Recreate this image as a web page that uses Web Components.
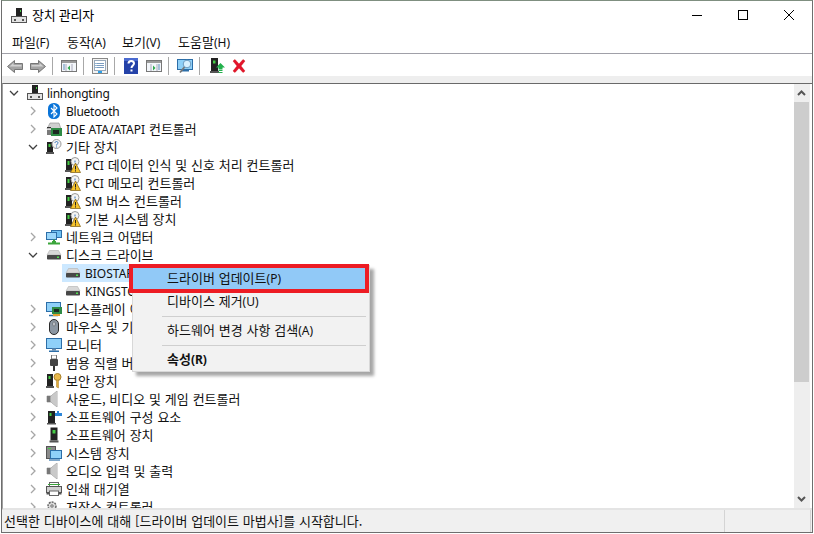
<!DOCTYPE html>
<html lang="ko">
<head>
<meta charset="utf-8">
<title>장치 관리자</title>
<style>
  html, body { margin: 0; height: 100%; background: #fff; overflow: hidden; }
  body { font: 13px "Noto Sans CJK KR", "Noto Sans", sans-serif; word-spacing: .2px; color: #000; }
</style>
</head>
<body>
<dm-window>
  <dm-titlebar slot="title">장치 관리자</dm-titlebar>
  <dm-menubar slot="menu">
    <dm-menu-item style="width:55px">파일<dm-lat>(F)</dm-lat></dm-menu-item>
    <dm-menu-item style="width:55px">동작<dm-lat>(A)</dm-lat></dm-menu-item>
    <dm-menu-item style="width:56px">보기<dm-lat>(V)</dm-lat></dm-menu-item>
    <dm-menu-item>도움말<dm-lat>(H)</dm-lat></dm-menu-item>
  </dm-menubar>
  <dm-toolbar slot="toolbar"></dm-toolbar>
  <dm-tree slot="tree">
    <dm-row level="0" state="open" icon="computer"><dm-lat tight>linhongting</dm-lat></dm-row>
    <dm-row level="1" state="closed" icon="bluetooth"><dm-lat tight>Bluetooth</dm-lat></dm-row>
    <dm-row level="1" state="closed" icon="ide"><dm-lat>IDE ATA/ATAPI</dm-lat> 컨트롤러</dm-row>
    <dm-row level="1" state="open" icon="other">기타 장치</dm-row>
    <dm-row level="2" icon="warn"><dm-lat>PCI</dm-lat> 데이터 인식 및 신호 처리 컨트롤러</dm-row>
    <dm-row level="2" icon="warn"><dm-lat>PCI</dm-lat> 메모리 컨트롤러</dm-row>
    <dm-row level="2" icon="warn"><dm-lat>SM</dm-lat> 버스 컨트롤러</dm-row>
    <dm-row level="2" icon="warn">기본 시스템 장치</dm-row>
    <dm-row level="1" state="closed" icon="network">네트워크 어댑터</dm-row>
    <dm-row level="1" state="open" icon="disk">디스크 드라이브</dm-row>
    <dm-row level="2" icon="disk" selected><dm-lat>BIOSTAR S120 240GB</dm-lat></dm-row>
    <dm-row level="2" icon="disk"><dm-lat>KINGSTON SA400S37</dm-lat></dm-row>
    <dm-row level="1" state="closed" icon="display">디스플레이 어댑터</dm-row>
    <dm-row level="1" state="closed" icon="mouse">마우스 및 기타 포인팅 장치</dm-row>
    <dm-row level="1" state="closed" icon="monitor">모니터</dm-row>
    <dm-row level="1" state="closed" icon="usb">범용 직렬 버스 컨트롤러</dm-row>
    <dm-row level="1" state="closed" icon="security">보안 장치</dm-row>
    <dm-row level="1" state="closed" icon="sound">사운드, 비디오 및 게임 컨트롤러</dm-row>
    <dm-row level="1" state="closed" icon="component">소프트웨어 구성 요소</dm-row>
    <dm-row level="1" state="closed" icon="tower">소프트웨어 장치</dm-row>
    <dm-row level="1" state="closed" icon="system">시스템 장치</dm-row>
    <dm-row level="1" state="closed" icon="sound">오디오 입력 및 출력</dm-row>
    <dm-row level="1" state="closed" icon="printer">인쇄 대기열</dm-row>
    <dm-row level="1" state="closed" icon="storage">저장소 컨트롤러</dm-row>
    <dm-context-menu slot="overlay">
      <dm-context-item active>드라이버 업데이트<dm-lat>(P)</dm-lat></dm-context-item>
      <dm-context-item>디바이스 제거<dm-lat>(U)</dm-lat></dm-context-item>
      <dm-separator></dm-separator>
      <dm-context-item>하드웨어 변경 사항 검색<dm-lat>(A)</dm-lat></dm-context-item>
      <dm-separator></dm-separator>
      <dm-context-item bold>속성<dm-lat>(R)</dm-lat></dm-context-item>
    </dm-context-menu>
  </dm-tree>
  <dm-statusbar slot="status">선택한 디바이스에 대해 [드라이버 업데이트 마법사]를 시작합니다.</dm-statusbar>
</dm-window>

<script>
// all icons are 16x16
const ICONS = {
  computer: `<rect x="5" y="0" width="6" height="9" fill="#222"/><rect x="9" y="2" width="1" height="2" fill="#4c4"/><rect x="0.5" y="8.5" width="15" height="6" fill="#e4e4e4" stroke="#555"/><rect x="3" y="11" width="2" height="2" fill="#555"/><rect x="11" y="11" width="2" height="2" fill="#555"/>`,
  bluetooth: `<rect x="2" y="0" width="12" height="16" rx="5.5" fill="#0a74d8"/><path d="M5 5l6 6-3 3V2l3 3-6 6" fill="none" stroke="#fff" stroke-width="1.1"/>`,
  ide: `<path d="M1 8l3-6h9l2 6z" fill="#cfcfcf" stroke="#888" stroke-width=".6"/><rect x="1" y="6" width="4" height="1" fill="#333"/><rect x="5" y="7" width="11" height="8" fill="#2e8b45"/><rect x="7" y="9" width="6" height="4" fill="#1c2a22"/><rect x="1" y="9" width="4" height="5" fill="#7a7a7a"/>`,
  other: `<rect x="1" y="3" width="6" height="10" fill="#222"/><rect x="2.5" y="5" width="2" height="3" fill="#4c4"/><rect x="0" y="13" width="8" height="2" fill="#555"/><circle cx="10.5" cy="5" r="4.5" fill="#f4f4f4" stroke="#9a9a9a"/><path d="M9 4c0-2 3-2 3 0 0 1-1.500 1-1.500 2.500M10.500 7.500v1" fill="none" stroke="#3a74b8"/>`,
  warn: `<rect x="1" y="2" width="6" height="11" fill="#222"/><rect x="2.500" y="4" width="2" height="4" fill="#4c4"/><rect x="0" y="13" width="8" height="2" fill="#555"/><circle cx="10" cy="4.500" r="4" fill="#f4f4f4" stroke="#9a9a9a"/><path d="M10 3.500v2" stroke="#3a74b8"/><path d="M10.500 6l5 9.500H5.500z" fill="#f6c32c" stroke="#7a5a10" stroke-width=".7"/><path d="M10.500 9v3.500M10.500 13.300v1.200" stroke="#222"/>`,
  network: `<rect x="5.500" y="1.500" width="10" height="7" fill="#6fc0f2" stroke="#2c6ea8"/><rect x="0.500" y="3.500" width="10" height="7" fill="#9ad6fa" stroke="#2c6ea8"/><path d="M2 14.500h12M8 10.500v4" stroke="#3aa53a" stroke-width="2"/><rect x="6" y="12" width="4" height="3" fill="#3aa53a"/>`,
  disk: `<path d="M1 8l2.500-4.500h9L15 8z" fill="#d8d8d8" stroke="#b0b0b0" stroke-width=".6"/><rect x="1" y="8" width="14" height="4.500" rx=".8" fill="#474747"/><rect x="11" y="9.500" width="2" height="1.500" fill="#4fe04f"/>`,
  display: `<rect x="0.500" y="1.500" width="14" height="9" fill="#8fd0f8" stroke="#2c6ea8"/><path d="M3 14.500h9" stroke="#2c6ea8" stroke-width="1.500"/><rect x="6" y="6" width="10" height="7" fill="#2e8b45"/><rect x="8" y="8" width="5" height="3" fill="#1c2a22"/><rect x="7" y="13" width="7" height="2" fill="#e0a030"/>`,
  mouse: `<rect x="3.500" y="0.500" width="9" height="15" rx="4.500" fill="#8c97a3" stroke="#2a2a2a"/><rect x="7" y="3" width="2" height="4" rx="1" fill="#dfe6ee" stroke="#444" stroke-width=".5"/>`,
  monitor: `<rect x="0.500" y="1.500" width="15" height="10" fill="#8fd0f8" stroke="#2c6ea8"/><rect x="6" y="11.500" width="4" height="2" fill="#6a8aa8"/><rect x="3" y="13.500" width="10" height="1.500" fill="#2c6ea8"/>`,
  usb: `<rect x="5.500" y="0" width="5" height="4" fill="#fff" stroke="#777"/><rect x="4" y="4" width="8" height="7" rx="1" fill="#444"/><path d="M8 11v5" stroke="#333" stroke-width="2"/>`,
  security: `<rect x="1" y="1" width="6" height="12" fill="#222"/><rect x="2.500" y="3" width="2" height="3" fill="#4c4"/><rect x="0" y="13" width="8" height="2" fill="#555"/><circle cx="11.500" cy="4" r="3.500" fill="#e8b84a" stroke="#a8802a"/><path d="M10.500 7h2v8l-2-1z" fill="#e0aa3a" stroke="#a8802a" stroke-width=".5"/>`,
  sound: `<path d="M1 5h4l6-5v16l-6-5H1z" fill="#a9a9a9" stroke="#7c7c7c" stroke-width=".6"/><path d="M5 5l6-5v16l-6-5z" fill="#c9c9c9"/><rect x="1" y="5" width="3" height="6" fill="#777"/>`,
  component: `<rect x="2" y="2" width="7" height="12" fill="#222"/><rect x="3.500" y="4" width="2" height="3" fill="#4c4"/><rect x="1" y="14" width="9" height="1.500" fill="#555"/><path d="M9 4h2V2h2v2h3v3H9z" fill="#2e86d8"/>`,
  tower: `<rect x="4.500" y="0.500" width="7" height="13" fill="#222"/><rect x="6.500" y="3" width="3" height="3.500" fill="#4c4"/><rect x="3.500" y="13.500" width="9" height="2" fill="#555"/>`,
  system: `<rect x="0.500" y="1.500" width="9" height="12" fill="#8a8a8a" stroke="#555"/><rect x="2" y="3" width="3" height="1" fill="#4c4"/><rect x="4.500" y="5.500" width="11" height="8" fill="#8fd0f8" stroke="#2c6ea8"/><path d="M3 15h11" stroke="#2c6ea8" stroke-width="1.200"/>`,
  printer: `<rect x="3.500" y="1.500" width="9" height="4" fill="#fff" stroke="#666"/><rect x="2" y="3" width="12" height="1" fill="#3aa53a"/><rect x="0.500" y="5.500" width="15" height="6" fill="#d0d0d0" stroke="#555"/><rect x="3.500" y="10" width="9" height="4.500" fill="#fff" stroke="#666"/><rect x="0.500" y="11.500" width="3" height="2" fill="#555"/><rect x="12.500" y="11.500" width="3" height="2" fill="#555"/>`,
  storage: `<circle cx="6" cy="7" r="4" fill="#ddd" stroke="#666" stroke-width="1.500" stroke-dasharray="2 1"/><circle cx="6" cy="7" r="1.200" fill="#fff" stroke="#666"/><rect x="3" y="12" width="12" height="3" fill="#777"/>`,
  tbBack: `<path d="M7.500 2.500L.5 8.500l7 6v-3h8v-6h-8z" fill="#a4a4a4" stroke="#777"/><path d="M2.500 8.500L6.500 5v2h8v1.500z" fill="#d2d2d2"/>`,
  tbForward: `<path d="M8.500 2.500l7 6-7 6v-3h-8v-6h8z" fill="#a4a4a4" stroke="#777"/><path d="M13.500 8.500L9.500 5v2h-8v1.500z" fill="#d2d2d2"/>`,
  tbConsole: `<rect x="0.500" y="2.500" width="15" height="11" fill="#f3f6fa" stroke="#777"/><rect x="1" y="3" width="14" height="2" fill="#9a9a9a"/><path d="M5 6v7M11 6v7" stroke="#aab"/><path d="M2 7h2M2 9h2M2 11h2" stroke="#5a8ab8"/><path d="M9 7.500v5L6.500 10z" fill="#2ca84a"/>`,
  tbProps: `<rect x="0.500" y="0.500" width="15" height="15" fill="#f2f2f2" stroke="#888"/><rect x="2.500" y="2.500" width="11" height="10" fill="#fff" stroke="#9ab"/><path d="M5 5.500h7M5 7.500h7M5 9.500h7" stroke="#7a9cc0"/><path d="M3.500 5.500h1M3.500 7.500h1M3.500 9.500h1" stroke="#2c6ea8"/><rect x="6" y="13" width="4" height="2" fill="#2ca0e8"/>`,
  tbHelp: `<rect x="1" y="0" width="14" height="16" fill="#2442a8"/><rect x="1" y="0" width="14" height="3" fill="#4a6ad0"/><path d="M5.500 5.500c0-3.500 5.500-3.500 5.500 0 0 2-2.500 2-2.500 4.500" fill="none" stroke="#fff" stroke-width="2"/><rect x="7.500" y="11.500" width="2" height="2" fill="#fff"/>`,
  tbAction: `<rect x="0.500" y="2.500" width="15" height="11" fill="#f3f6fa" stroke="#777"/><rect x="1" y="3" width="14" height="2" fill="#9a9a9a"/><path d="M5 6v7M11 6v7" stroke="#aab"/><path d="M12 7h2M12 9h2M12 11h2" stroke="#5a8ab8"/><path d="M7 7.500v5L9.500 10z" fill="#2ca84a"/>`,
  tbScan: `<rect x="0.500" y="1.500" width="15" height="10" fill="#8fd0f8" stroke="#2c6ea8"/><rect x="4" y="12" width="8" height="1.500" fill="#2c6ea8"/><circle cx="10" cy="6" r="3.800" fill="#d8f0ff" stroke="#6a9ac0"/><path d="M7.500 9L3 14.500" stroke="#777" stroke-width="1.800"/>`,
  tbUpdate: `<rect x="1" y="0" width="7" height="13" fill="#222"/><rect x="3" y="2.500" width="2.500" height="3" fill="#4c4"/><rect x="0" y="13" width="9" height="2" fill="#555"/><path d="M10.500 5l4.500 4.500h-2.500v2h-4v-2H6z" fill="#22b14c"/><path d="M8.500 12.500h4M8.500 14.500h4" stroke="#22b14c" stroke-width="1.200"/>`,
  tbRemove: `<path d="M2 3l4 5-4 5 2 1.500L8 10l4 4.500 2-1.500-4-5 4-5-2-1.500L8 6 4 1.500z" fill="#e3132c" stroke="#c00" stroke-width=".4"/>`
};

class DmIcon extends HTMLElement {
  connectedCallback() {
    const root = this.shadowRoot || this.attachShadow({ mode: "open" });
    root.innerHTML = `<style>:host{display:block;width:16px;height:16px;flex:none} svg{display:block}</style>
      <svg width="16" height="16" viewBox="0 0 16 16" shape-rendering="geometricPrecision">${ICONS[this.getAttribute("name")] || ""}</svg>`;
  }
}
customElements.define("dm-icon", DmIcon);

// latin runs are set a size below the hangul, as in the reference
class DmLat extends HTMLElement {
  constructor() {
    super();
    // no whitespace around the slot: this element is inline
    this.attachShadow({ mode: "open" }).innerHTML = `<style>
        :host { display: inline; font-family: "Noto Sans", sans-serif; font-size: 12px; word-spacing: 0; }
        :host([tight]) { letter-spacing: -.25px; }
      </style><slot></slot>`;
  }
}
customElements.define("dm-lat", DmLat);

const windowTpl = document.createElement("template");
windowTpl.innerHTML = `
  <style>
    :host {
      display: flex;
      flex-direction: column;
      box-sizing: border-box;
      height: 533px;
      margin: 0 1px 0 1px;
      background: #fff;
      border: 1px solid #6e6e6e;
      border-top: 1px solid #7f8f80;
      overflow: hidden;
    }
    .tree { flex: 1; min-height: 0; display: flex; }
  </style>
  <slot name="title"></slot>
  <slot name="menu"></slot>
  <slot name="toolbar"></slot>
  <div class="tree"><slot name="tree"></slot></div>
  <slot name="status"></slot>
`;
class DmWindow extends HTMLElement {
  constructor() {
    super();
    this.attachShadow({ mode: "open" });
    this.shadowRoot.appendChild(windowTpl.content.cloneNode(true));
  }
}
customElements.define("dm-window", DmWindow);

const titleTpl = document.createElement("template");
titleTpl.innerHTML = `
  <style>
    :host { display: flex; align-items: center; height: 30px; flex: none; padding-left: 9px; }
    dm-icon { margin-right: 5px; }
    .text { flex: 1; letter-spacing: -.3px; padding-bottom: 3px; line-height: 18px; }
    .btn { width: 46px; height: 30px; display: flex; align-items: center; justify-content: center; padding-bottom: 2px; box-sizing: border-box; }
    svg { display: block; }
  </style>
  <dm-icon name="computer"></dm-icon>
  <span class="text"><slot></slot></span>
  <span class="btn"><svg width="10" height="10"><path d="M0 5.500h10" stroke="#000"/></svg></span>
  <span class="btn"><svg width="10" height="10"><rect x=".5" y=".5" width="9" height="9" fill="none" stroke="#000"/></svg></span>
  <span class="btn"><svg width="10" height="10"><path d="M0 0l10 10M10 0L0 10" stroke="#000"/></svg></span>
`;
class DmTitlebar extends HTMLElement {
  constructor() {
    super();
    this.attachShadow({ mode: "open" });
    this.shadowRoot.appendChild(titleTpl.content.cloneNode(true));
  }
}
customElements.define("dm-titlebar", DmTitlebar);

class DmMenubar extends HTMLElement {
  constructor() {
    super();
    this.attachShadow({ mode: "open" }).innerHTML = `
      <style>
        :host { display: flex; align-items: center; flex: none; height: 22px; padding-left: 10px; border-bottom: 1px solid #a0a0a8; }
      </style>
      <slot></slot>`;
  }
}
customElements.define("dm-menubar", DmMenubar);

class DmMenuItem extends HTMLElement {
  constructor() {
    super();
    this.attachShadow({ mode: "open" }).innerHTML = `
      <style>:host { display: block; color: #111; line-height: 18px; }</style><slot></slot>`;
  }
}
customElements.define("dm-menu-item", DmMenuItem);

class DmToolbar extends HTMLElement {
  constructor() {
    super();
    const groups = [
      ["tbBack", "tbForward"],
      ["tbConsole"],
      ["tbProps"],
      ["tbHelp", "tbAction"],
      ["tbScan"],
      ["tbUpdate", "tbRemove"]
    ];
    const html = groups.map(g => `<div class="group">${g.map(n => `<dm-icon name="${n}"></dm-icon>`).join("")}</div>`).join('<i class="sep"></i>');
    this.attachShadow({ mode: "open" }).innerHTML = `
      <style>
        :host { display: flex; align-items: center; flex: none; height: 20px; padding: 2px 0 0 5px; background: #fff; border-bottom: 7px solid #eeeeee; }
        .group { display: flex; gap: 7px; }
        .group:last-child { gap: 5px; margin-left: 2px; }
        .sep { width: 1px; height: 18px; background: #a8a8a8; margin: 0 8px 0 6px; }
      </style>
      ${html}`;
  }
}
customElements.define("dm-toolbar", DmToolbar);

const treeTpl = document.createElement("template");
treeTpl.innerHTML = `
  <style>
    :host {
      display: flex;
      flex: 1;
      min-width: 0;
      position: relative;
      border-top: 1px solid #696969;
      border-left: 1px solid #a0a0a0;
      border-bottom: 2px solid #e4e4e4;
      padding-right: 2px;
      overflow: hidden;
    }
    .list { flex: 1; min-width: 0; overflow: hidden; }
    .bar { width: 16px; flex: none; background: #eeeeee; display: flex; flex-direction: column; }
    .arrow { height: 18px; flex: none; display: flex; align-items: center; justify-content: center; padding-right: 1px; }
    .track { flex: 1; }
    .thumb { height: 280px; width: 15px; background: #cdcdcd; }
    svg { display: block; }
    ::slotted(dm-context-menu) { position: absolute; left: 129px; top: 181px; }
  </style>
  <div class="list"><slot></slot></div>
  <div class="bar">
    <div class="arrow"><svg width="9" height="6"><path d="M1 5l3.500-3.500L8 5" fill="none" stroke="#555" stroke-width="2"/></svg></div>
    <div class="thumb"></div>
    <div class="track"></div>
    <div class="arrow"><svg width="9" height="6"><path d="M1 1l3.500 3.500L8 1" fill="none" stroke="#555" stroke-width="2"/></svg></div>
  </div>
  <slot name="overlay"></slot>
`;
class DmTree extends HTMLElement {
  constructor() {
    super();
    this.attachShadow({ mode: "open" });
    this.shadowRoot.appendChild(treeTpl.content.cloneNode(true));
  }
}
customElements.define("dm-tree", DmTree);

class DmRow extends HTMLElement {
  connectedCallback() {
    const level = Number(this.getAttribute("level") || 0);
    const state = this.getAttribute("state");
    let chevron = "";
    if (state === "open") chevron = `<svg width="10" height="7"><path d="M1 1l4 4 4-4" fill="none" stroke="#404040" stroke-width="1.300"/></svg>`;
    if (state === "closed") chevron = `<svg width="7" height="10"><path d="M1 1l4 4-4 4" fill="none" stroke="#a6a6a6" stroke-width="1.300"/></svg>`;
    this.attachShadow({ mode: "open" }).innerHTML = `
      <style>
        :host { display: flex; align-items: center; height: 18px; padding-left: calc(${level} * 19px + 1px); white-space: nowrap; color: #111; }
        .chev { width: 20px; height: 18px; flex: none; display: flex; align-items: center; justify-content: center; }
        .body { display: flex; align-items: center; gap: 4px; height: 18px; padding: 0 3px; }
        .label { line-height: 18px; }
        :host([selected]) .body { background: #cce8ff; }
      </style>
      <span class="chev">${chevron}</span>
      <span class="body"><dm-icon name="${this.getAttribute("icon")}"></dm-icon><span class="label"><slot></slot></span></span>`;
  }
}
customElements.define("dm-row", DmRow);

class DmContextMenu extends HTMLElement {
  constructor() {
    super();
    this.attachShadow({ mode: "open" }).innerHTML = `
      <style>
        :host { display: block; box-sizing: border-box; width: 238px; background: #f2f2f2; border: 1px solid #d8d8d8; box-shadow: 4px 4px 3px rgba(0,0,0,.35); padding-bottom: 1px; }
      </style>
      <slot></slot>`;
  }
}
customElements.define("dm-context-menu", DmContextMenu);

class DmContextItem extends HTMLElement {
  constructor() {
    super();
    this.attachShadow({ mode: "open" }).innerHTML = `
      <style>
        :host { display: flex; align-items: center; box-sizing: border-box; height: 22px; padding: 0 0 2px 34px; color: #111; white-space: nowrap; }
        :host([bold]) { font-weight: 700; }
        :host([active]) {
          height: 29px;
          margin: -2px 0 -3px -4px;
          background: #91c9f7;
          border: 4px solid #ed1c24;
        }
      </style>
      <span><slot></slot></span>`;
  }
}
customElements.define("dm-context-item", DmContextItem);

class DmSeparator extends HTMLElement {
  constructor() {
    super();
    this.attachShadow({ mode: "open" }).innerHTML = `
      <style>:host { display: block; height: 1px; margin: 4px 3px 2px 29px; background: #cfcfcf; }</style>`;
  }
}
customElements.define("dm-separator", DmSeparator);

class DmStatusbar extends HTMLElement {
  constructor() {
    super();
    this.attachShadow({ mode: "open" }).innerHTML = `
      <style>
        :host { display: flex; flex: none; height: 22px; background: #f0f0f0; }
        .text { width: 723px; box-sizing: border-box; padding-left: 2px; line-height: 21px; border-right: 1px solid #d4d4d4; white-space: nowrap; color: #111; }
        .mid { width: 85px; border-right: 1px solid #d4d4d4; }
      </style>
      <div class="text"><slot></slot></div>
      <div class="mid"></div>`;
  }
}
customElements.define("dm-statusbar", DmStatusbar);
</script>
</body>
</html>
